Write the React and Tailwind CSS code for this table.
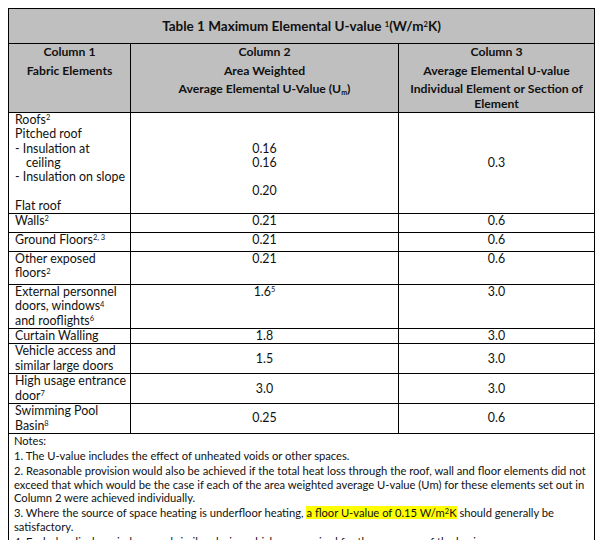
import React from "react";

const td = "border border-black pl-[6px] pr-[2px] py-0 align-top";
const mid = "border border-black px-[6px] py-0 align-middle text-center";
const top = "border border-black px-[6px] py-0 align-top text-center";

const S = ({ children }) => <sup className="text-[7.5px]">{children}</sup>;

export default function App() {
  return (
    <div className="bg-white w-[601px] h-[540px] overflow-hidden pt-2 pl-2 font-['Lato',sans-serif] text-[#111] text-[12.4px] leading-[14.3px]">
      <table className="table-fixed border-collapse w-[586px]">
        <colgroup>
          <col className="w-[122px]" />
          <col className="w-[268px]" />
          <col className="w-[196px]" />
        </colgroup>
        <tbody>
          {/* Title */}
          <tr className="h-[35px] bg-[#bfbfbf]">
            <td colSpan={3} className="border border-black text-center align-middle font-bold text-[13.5px]">
              Table 1 Maximum Elemental U-value <S>1</S>(W/m<S>2</S>K)
            </td>
          </tr>
          {/* Column headers */}
          <tr className="h-[69px] bg-[#bfbfbf] font-bold text-[12.2px] leading-[14.5px]">
            <td className="border border-black align-top text-center pt-[1px]">
              <p className="mb-1">Column 1</p>
              <p>Fabric Elements</p>
            </td>
            <td className="border border-black align-top text-center pt-[1px]">
              <p className="mb-1">Column 2</p>
              <p className="mb-1">Area Weighted</p>
              <p>
                Average Elemental U-Value (U<sub className="text-[7px]">m</sub>)
              </p>
            </td>
            <td className="border border-black align-top text-center pt-[1px] px-1">
              <p className="mb-1">Column 3</p>
              <p className="mb-1">Average Elemental U-value</p>
              <p>Individual Element or Section of Element</p>
            </td>
          </tr>

          <tr className="h-[101px]">
            <td className={td}>
              <p>Roofs<S>2</S></p>
              <p>Pitched roof</p>
              <p>- Insulation at</p>
              <p className="pl-[11px]">ceiling</p>
              <p>- Insulation on slope</p>
              <p>&nbsp;</p>
              <p>Flat roof</p>
            </td>
            <td className={top}>
              <p>&nbsp;</p>
              <p>&nbsp;</p>
              <p>0.16</p>
              <p>0.16</p>
              <p>&nbsp;</p>
              <p>0.20</p>
            </td>
            <td className={mid}>0.3</td>
          </tr>

          <tr className="h-[19px]">
            <td className={td}>Walls<S>2</S></td>
            <td className={top}>0.21</td>
            <td className={top}>0.6</td>
          </tr>

          <tr className="h-[19px]">
            <td className={td}>Ground Floors<S>2, 3</S></td>
            <td className={top}>0.21</td>
            <td className={top}>0.6</td>
          </tr>

          <tr className="h-[33px]">
            <td className={td}>
              Other exposed
              <br />
              floors<S>2</S>
            </td>
            <td className={top}>0.21</td>
            <td className={top}>0.6</td>
          </tr>

          <tr className="h-[43px]">
            <td className={td}>
              External personnel
              <br />
              doors, windows<S>4</S>
              <br />
              and rooflights<S>6</S>
            </td>
            <td className={top}>
              1.6<S>5</S>
            </td>
            <td className={top}>3.0</td>
          </tr>

          <tr className="h-[15px]">
            <td className={td}>Curtain Walling</td>
            <td className={mid}>1.8</td>
            <td className={mid}>3.0</td>
          </tr>

          <tr className="h-[30px]">
            <td className={td}>
              Vehicle access and
              <br />
              similar large doors
            </td>
            <td className={mid}>1.5</td>
            <td className={mid}>3.0</td>
          </tr>

          <tr className="h-[30px]">
            <td className={td}>
              High usage entrance
              <br />
              door<S>7</S>
            </td>
            <td className={mid}>3.0</td>
            <td className={mid}>3.0</td>
          </tr>

          <tr className="h-[29px]">
            <td className={td}>
              Swimming Pool
              <br />
              Basin<S>8</S>
            </td>
            <td className={mid}>0.25</td>
            <td className={mid}>0.6</td>
          </tr>

          {/* Notes */}
          <tr>
            <td colSpan={3} className="border border-black align-top px-[5px] pt-0 pb-2 text-[11.2px] leading-[13.3px] whitespace-nowrap">
              <p className="mb-[2px]">Notes:</p>
              <p className="mb-[2px]">1. The U-value includes the effect of unheated voids or other spaces.</p>
              <p className="mb-[2px]">
                2. Reasonable provision would also be achieved if the total heat loss through the roof, wall and floor
                elements did not
                <br />
                exceed that which would be the case if each of the area weighted average U-value (Um) for these elements
                set out in
                <br />
                Column 2 were achieved individually.
              </p>
              <p className="mb-[2px]">
                3. Where the source of space heating is underfloor heating,{" "}
                <span className="bg-[#ffff00]">
                  a floor U-value of 0.15 W/m<S>2</S>K
                </span>{" "}
                should generally be
                <br />
                satisfactory.
              </p>
              <p>
                4. Excludes display windows and similar glazing which are required for the purposes of the business
              </p>
            </td>
          </tr>
        </tbody>
      </table>
    </div>
  );
}
